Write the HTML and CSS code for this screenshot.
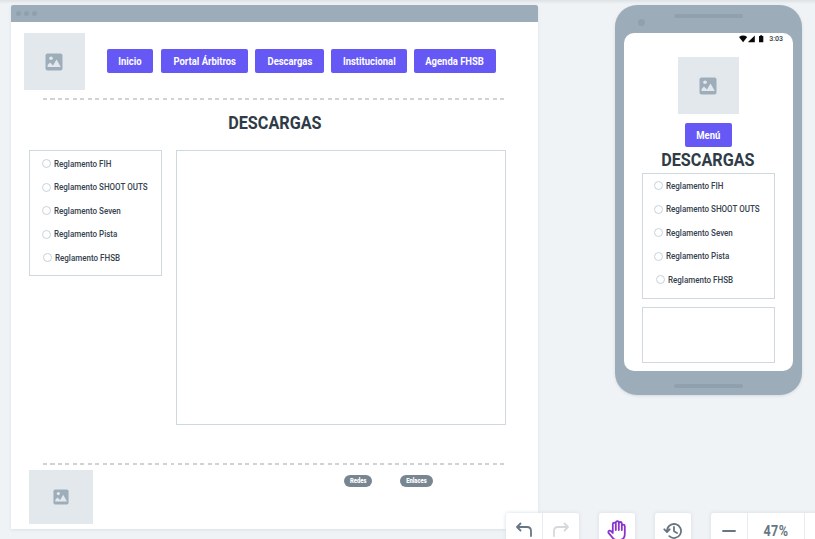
FILE: index.html
```html
<!DOCTYPE html>
<html lang="es">
<head>
<meta charset="utf-8">
<title>Descargas</title>
<link rel="stylesheet" href="styles.css">
</head>
<body>
<svg class="defs" width="0" height="0">
  <symbol id="picture" viewBox="0 0 18 18">
    <rect x=".5" y=".5" width="17" height="17" rx="2" fill="#9eadba"/>
    <circle cx="6" cy="5.2" r="1.8" fill="#e2e8ec"/>
    <path d="M2.600 14V12L5 9.500 8 12.500 11.500 6.600 15.800 14z" fill="#e2e8ec"/>
  </symbol>
</svg>
<main class="canvas">
  <section class="browser">
    <div class="browser-bar"><i></i><i></i><i></i></div>
    <header class="site-header">
      <div class="image"><svg width="18" height="18"><use href="#picture"/></svg></div>
      <nav class="nav">
        <a class="button inicio"><span>Inicio</span></a>
        <a class="button portal"><span>Portal Árbitros</span></a>
        <a class="button descargas"><span>Descargas</span></a>
        <a class="button institucional"><span>Institucional</span></a>
        <a class="button agenda"><span>Agenda FHSB</span></a>
      </nav>
    </header>
    <div class="divider"></div>
    <h1 class="title"><span>DESCARGAS</span></h1>
    <div class="columns">
      <ul class="options">
        <li><i></i><span>Reglamento FIH</span></li>
        <li><i></i><span>Reglamento SHOOT OUTS</span></li>
        <li><i></i><span>Reglamento Seven</span></li>
        <li><i></i><span>Reglamento Pista</span></li>
        <li class="shifted"><i></i><span>Reglamento FHSB</span></li>
      </ul>
      <div class="content"></div>
    </div>
    <div class="divider bottom"></div>
    <footer class="site-footer">
      <div class="image small"><svg width="16" height="16"><use href="#picture"/></svg></div>
      <a class="pill"><span>Redes</span></a>
      <a class="pill wide"><span>Enlaces</span></a>
    </footer>
  </section>

  <section class="phone">
    <div class="phone-top"><i class="camera"></i><i class="speaker"></i></div>
    <div class="screen">
      <div class="status">
        <svg width="25" height="8" viewBox="0 0 25 8" fill="#050708"><path d="M0 1.900Q4.100-.9 8.200 1.900L4.100 7.200zM9.300 7.200V6.800L15.800.4V7.200zM20 1.100h1.200V.3h1.900v.8h1.200V7.200H20z"/></svg>
        <span>3:03</span>
      </div>
      <div class="image"><svg width="18" height="18"><use href="#picture"/></svg></div>
      <a class="button menu"><span>Menú</span></a>
      <h2 class="title"><span>DESCARGAS</span></h2>
      <ul class="options">
        <li><i></i><span>Reglamento FIH</span></li>
        <li><i></i><span>Reglamento SHOOT OUTS</span></li>
        <li><i></i><span>Reglamento Seven</span></li>
        <li><i></i><span>Reglamento Pista</span></li>
        <li class="shifted"><i></i><span>Reglamento FHSB</span></li>
      </ul>
      <div class="content"></div>
    </div>
    <div class="phone-bottom"></div>
  </section>
</main>

<div class="toolbar">
  <div class="group history">
    <button><svg width="18" height="18" viewBox="0 0 18 18"><path d="M5.500 1.500 2 5l3.500 3.500M2.300 5H12q4 0 4 4v5"/></svg></button>
    <button class="disabled"><svg width="18" height="18" viewBox="0 0 18 18"><path d="M12.500 1.500 16 5l-3.500 3.500M15.700 5H6Q2 5 2 9v5"/></svg></button>
  </div>
  <div class="group single">
    <button class="active"><svg width="20" height="22" viewBox="0 0 20 22"><path d="M5.800 12V4.200a1.500 1.500 0 0 1 3 0V10V2.700a1.500 1.500 0 0 1 3 0V10V3.500a1.500 1.500 0 0 1 3 0V10V6.200a1.500 1.500 0 0 1 3 0V14q0 6-6 6h-2q-3 0-4.800-3L1.500 12.800q-.5-1.800 1-2.200 1-.2 1.800.7L5.800 13"/></svg></button>
  </div>
  <div class="group single">
    <button><svg width="20" height="20" viewBox="0 0 20 20"><path d="M4 10a7 7 0 1 1 2.300 5.200M1.300 8.300 4 11l2.700-2.700M11 6v4.300l3 1.700"/></svg></button>
  </div>
  <div class="group zoom">
    <button><svg width="14" height="14" viewBox="0 0 14 14"><path d="M1 7h12"/></svg></button>
    <button class="level"><span>47%</span></button>
    <button></button>
  </div>
</div>
</body>
</html>
```

FILE: styles.css
```css
* { box-sizing: border-box; }
body {
  margin: 0;
  width: 815px;
  height: 539px;
  overflow: hidden;
  position: relative;
  background: linear-gradient(#dfe1e4, #eff3f6 4px);
  color: #2f3c48;
  font-family: Roboto, "Liberation Sans", sans-serif;
}
ul, h1, h2 { margin: 0; padding: 0; list-style: none; }
svg { display: block; flex: none; }
.defs { position: absolute; }
.canvas {
  display: flex;
  align-items: flex-start;
  justify-content: space-between;
  padding: 5px 13px 0 11px;
}
.browser {
  width: 527px;
  height: 524px;
  background: #fff;
  border-radius: 2px 2px 0 0;
  box-shadow: 0 1px 3px #d9dfe4;
}
.browser-bar {
  display: flex;
  align-items: center;
  gap: 3px;
  height: 17px;
  padding-left: 5px;
  border-radius: 2px 2px 0 0;
  background: #9dacb9;
}
.browser-bar i { width: 5px; height: 5px; border-radius: 50%; background: #8fa0ae; }
.site-header { display: flex; padding: 11px 0 0 13px; }
.image {
  display: flex;
  align-items: center;
  justify-content: center;
  width: 61px;
  height: 57px;
  padding-right: 1px;
  background: #e2e8ec;
}
.image.small { width: 64px; height: 54px; padding: 0 0 1px; }
.nav { display: flex; margin: 16px 0 0 22px; }
.button {
  display: flex;
  align-items: center;
  justify-content: center;
  height: 24px;
  padding-top: 1px;
  border-radius: 2px;
  background: #6558f5;
  color: #fff;
  font-size: 10.5px;
  font-weight: 700;
  line-height: 24px;
}
.button span, .title span, .pill span, .level span {
  display: block;
  white-space: nowrap;
  transform: scaleX(.9);
}
.inicio { width: 46px; margin-right: 8px; }
.portal { width: 87px; margin-right: 7px; }
.descargas { width: 69px; margin-right: 7px; }
.institucional { width: 76px; margin-right: 7px; }
.agenda { width: 82px; }
.divider {
  width: 463px;
  height: 2px;
  margin: 8px 0 0 31px;
  background: repeating-linear-gradient(90deg, transparent 0 1px, #cfd3d6 1px 5px, transparent 5px 7.5px);
}
.title {
  display: flex;
  justify-content: center;
  font-size: 18px;
  font-weight: 700;
  line-height: 20px;
}
.browser .title { margin-top: 13px; }
.columns { display: flex; align-items: flex-start; gap: 14px; padding-left: 18px; margin-top: 17px; }
.options {
  display: flex;
  flex-direction: column;
  width: 133px;
  height: 126px;
  padding: 1px 0 0 12px;
  border: 1px solid #ced8df;
  color: #35424e;
  font-size: 9px;
  font-weight: 500;
}
.options li { display: flex; align-items: center; gap: 3px; height: 23.5px; flex: none; }
.options i { width: 9px; height: 9px; border: 1px solid #c7d3dc; border-radius: 50%; flex: none; }
.options span { white-space: nowrap; transform: scaleX(.89); transform-origin: left; }
.options .shifted { padding-left: 1px; }
.content { border: 1px solid #ced8df; }
.columns .content { width: 330px; height: 275px; }
.divider.bottom { margin-top: 38px; }
.site-footer { display: flex; padding: 5px 0 0 18px; }
.pill {
  display: flex;
  align-items: center;
  justify-content: center;
  width: 28px;
  height: 12px;
  margin: 5px 0 0 251px;
  border-radius: 6px;
  background: #788692;
  color: #fff;
  font-size: 6.5px;
  font-weight: 900;
}
.pill.wide { width: 33px; margin-left: 28px; }

.phone {
  width: 187px;
  height: 390px;
  padding: 0 9px;
  border-radius: 22px;
  background: #9dacb9;
  box-shadow: 0 1px 3px #d3dae0;
}
.phone-top { display: flex; height: 28px; }
.phone i { flex: none; }
.camera { width: 7px; height: 7px; margin: 14px 0 0 14px; border-radius: 50%; background: #8fa0ae; }
.speaker { width: 69px; height: 4px; margin: 9px 0 0 29px; border-radius: 2px; background: #8fa0ae; }
.screen {
  display: flex;
  flex-direction: column;
  align-items: center;
  width: 169px;
  height: 338px;
  border-radius: 10px;
  background: #fff;
}
.status {
  display: flex;
  align-self: stretch;
  justify-content: flex-end;
  gap: 5px;
  height: 24px;
  padding: 2px 10px 0 0;
  font-size: 7px;
  font-weight: 500;
  line-height: 8px;
}
.menu { width: 47px; margin: 9px 1px 3px 0; }
.screen .title { padding-right: 1px; }
.screen .options { padding: 0 0 0 11px; margin: 3px 0 8px; }
.screen .shifted { padding-left: 2px; }
.screen .content { width: 133px; height: 56px; }
.phone-bottom { width: 69px; height: 4px; margin: 13px auto 0; border-radius: 2px; background: #8fa0ae; }

.toolbar { position: absolute; left: 506px; top: 513px; display: flex; }
.group {
  display: flex;
  height: 36px;
  border-radius: 3px;
  background: #fff;
  box-shadow: 0 0 4px #d5dce2;
}
.history { width: 73px; margin-right: 20px; }
.single { width: 36px; margin-right: 20px; }
.zoom { width: 130px; }
.group button {
  display: flex;
  align-items: flex-start;
  justify-content: center;
  width: 36px;
  padding: 9px 0 0;
  border: 0;
  background: none;
  color: #687684;
  font-family: inherit;
}
.group button + button { border-left: 1px solid #e8ebef; }
.group svg { fill: none; stroke: currentColor; stroke-width: 1.8; stroke-linecap: round; stroke-linejoin: round; }
.group .disabled { color: #d5d9dd; }
.single button { padding-top: 8px; }
.group .active { color: #8a35c9; padding-top: 7px; }
.zoom button { padding-top: 11px; }
.group .level { width: 57px; font-size: 14px; font-weight: 700; line-height: 15px; letter-spacing: .5px; }
```
